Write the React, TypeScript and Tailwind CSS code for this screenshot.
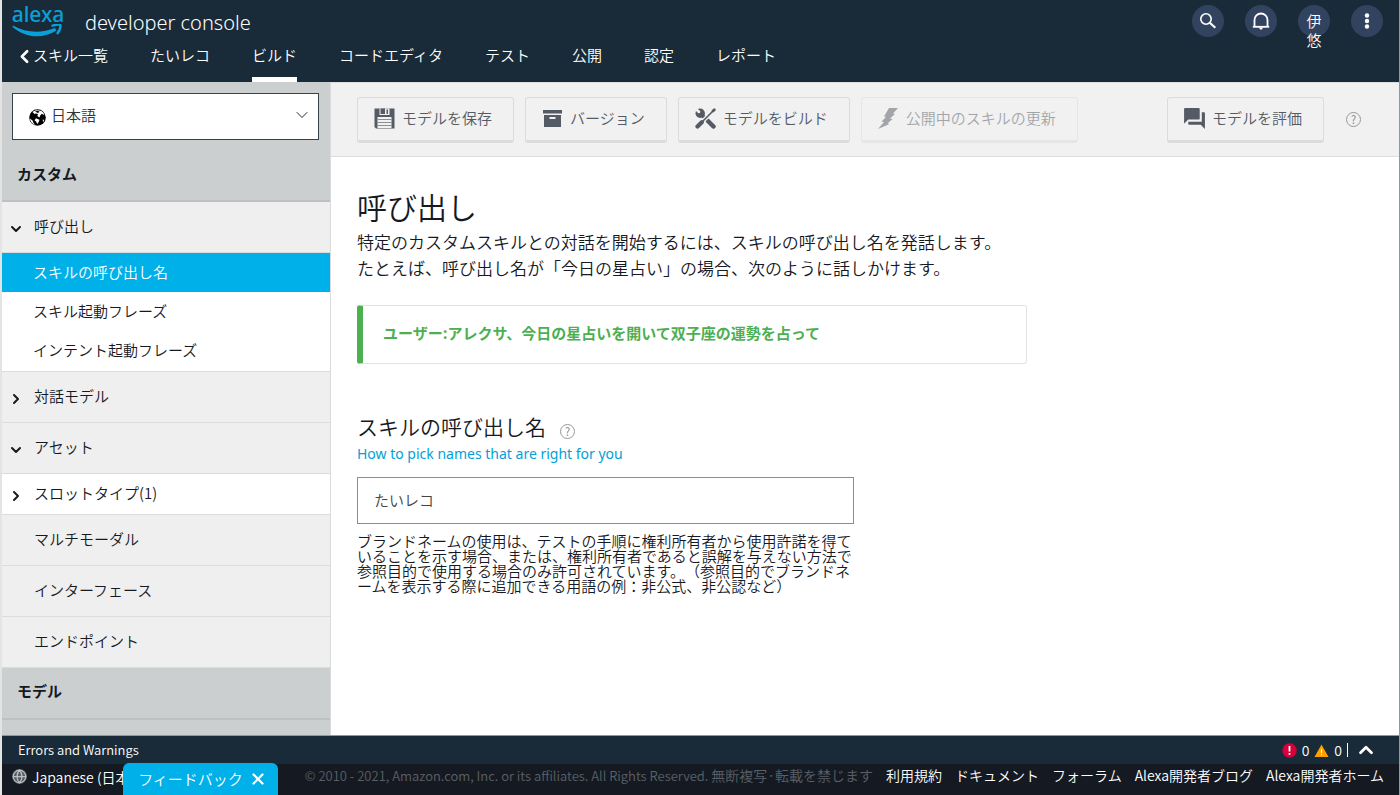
import type { ReactNode } from "react";
import { ChevronDown, ChevronLeft, ChevronRight, ChevronUp, Globe, X } from "lucide-react";
import { MdForum } from "react-icons/md";

const jp = "font-['Noto_Sans_CJK_JP',sans-serif]";

const tabs = ["たいレコ", "ビルド", "コードエディタ", "テスト", "公開", "認定", "レポート"];

const footerLinks = ["利用規約", "ドキュメント", "フォーラム", "Alexa開発者ブログ", "Alexa開発者ホーム"];

function SearchIcon() {
  return (
    <svg width="18" height="18" viewBox="0 0 18 18" fill="none" stroke="currentColor" aria-hidden>
      <circle cx="7" cy="7" r="5.200" strokeWidth="1.600" />
      <path d="M10.800 10.800l5.500 5" strokeWidth="2.200" />
    </svg>
  );
}

function BellIcon() {
  return (
    <svg width="18" height="18" viewBox="0 0 18 18" fill="none" stroke="currentColor" strokeWidth="1.800" aria-hidden>
      <path d="M2.500 14.500V8a6.500 6.500 0 0 1 13 0v6.500" />
      <path d="M.800 14.800h16.400" />
      <path d="M6.500 15.500h5L9 18z" fill="currentColor" stroke="none" />
    </svg>
  );
}

function DotsIcon() {
  return (
    <svg width="16" height="16" viewBox="0 0 16 16" fill="currentColor" aria-hidden>
      <circle cx="8" cy="2.5" r="2.2" />
      <circle cx="8" cy="8" r="2.2" />
      <circle cx="8" cy="13.5" r="2.2" />
    </svg>
  );
}

function EarthIcon() {
  return (
    <svg width="17" height="17" viewBox="0 0 17 17" className="pointer-events-none absolute left-[17px] top-4" aria-hidden>
      <circle cx="8.500" cy="8.500" r="8.300" />
      <path d="M3.500 3C6 .800 11.500.500 14.300 3.600l1.200 2.600-2.700-1.400-1.600 1.700-.700 2L8.300 7 9 5 7 4.500l-1.500.600L4.500 4z" fill="#fff" />
      <path d="M6 2.600l2.800-.800 1.700.900-1.500 1.200z" />
      <path d="M.900 9.500l2.600 2 1 2.500 1.600 1.800C3.300 15 1.300 12.800.900 9.500zM7 9.200l3.500 1.500-.800 2.300-1.500 2-1-2.300-1.600-1.500z" fill="#fff" />
      <path d="M13.700 10.500l1.500.500-1.200 2.600z" fill="#fff" />
    </svg>
  );
}

function SaveIcon() {
  return (
    <svg width="21" height="21" viewBox="0 0 21 21" aria-hidden>
      <path d="M.5.5h20v20H2l-1.500-1.500z" fill="#545b64" />
      <path d="M5.500.5h10v6.500h-10z" fill="#f1f1f1" />
      <path d="M6.500.5h4.500v5.500H6.500zM12.500 1.500h1.500v4.500h-1.500z" fill="#545b64" />
      <path d="M3.500 9h14v11h-14z" fill="#f1f1f1" />
      <path d="M3.500 11.500h14M3.500 14.500h14M3.500 17.500h14" stroke="#8b9096" />
    </svg>
  );
}

function ArchiveIcon() {
  return (
    <svg width="21" height="21" viewBox="0 0 21 21" aria-hidden>
      <path d="M1 2h19v3.500H1z" fill="#545b64" />
      <path d="M2 7h17v12H2z" fill="#545b64" />
      <path d="M7.500 9h6v2h-6z" fill="#f1f1f1" />
    </svg>
  );
}

function ToolsIcon() {
  return (
    <svg width="21" height="21" viewBox="0 0 21 21" fill="none" strokeLinecap="round" aria-hidden>
      <circle cx="5.200" cy="5.200" r="4.700" fill="#545b64" />
      <path d="M1.500-.500l3.800 3.800-.200 1.800-1.800.200L-.500 1.500z" fill="#f1f1f1" />
      <path d="M7 7l4 4.500" stroke="#545b64" strokeWidth="3.500" />
      <path d="M13 13l5.500 5.500" stroke="#545b64" strokeWidth="4.500" />
      <path d="M19 2L4 17" stroke="#f1f1f1" strokeWidth="4" strokeLinecap="butt" />
      <path d="M18.500 2.500L8 13" stroke="#545b64" strokeWidth="1.600" />
      <path d="M19.300 1.700l-1.300 1.300" stroke="#545b64" strokeWidth="2.800" />
      <path d="M6.800 14.200l-4.300 4.300" stroke="#545b64" strokeWidth="4.200" />
    </svg>
  );
}

function BoltIcon() {
  return (
    <svg width="21" height="21" viewBox="0 0 21 21" fill="#545b64" aria-hidden>
      <path d="M11 0h9l-5 5.500 2 .5-5 4.500 2.500.5-5 4.500 2 .5L0 21l6-7-2.500-.5L8 9l-2-.5z" />
    </svg>
  );
}

function HelpButton() {
  return (
    <button
      type="button"
      aria-label="ヘルプ"
      className="flex h-[15px] w-[15px] shrink-0 items-center justify-center rounded-full border border-[#959a9e] text-[11px] leading-none text-[#7b8084]"
    >
      ?
    </button>
  );
}

function RoundButton({ label, children }: { label: string; children: ReactNode }) {
  return (
    <button
      type="button"
      aria-label={label}
      className="flex h-8 w-8 items-center justify-center rounded-full bg-[#32435f] text-white"
    >
      {children}
    </button>
  );
}

function ToolButton({ icon, label, disabled = false }: { icon: ReactNode; label: string; disabled?: boolean }) {
  return (
    <button
      type="button"
      disabled={disabled}
      className="flex h-[46px] shrink-0 items-center gap-[7px] rounded-[3px] border border-b-[3px] border-[#dcdcdc] pl-4 pr-[21px] text-[15px] leading-5 text-[#545b64] disabled:opacity-50"
    >
      {icon}
      <span className="pb-[2px]">{label}</span>
    </button>
  );
}

function SideRow({ label, state, slim = false }: { label: string; state?: "open" | "closed"; slim?: boolean }) {
  return (
    <a
      href="#"
      className={`flex shrink-0 items-center border-b border-[#dcdcdc] pl-[6px] ${slim ? "h-[41px] bg-white" : "h-[51px] bg-[#efefef]"}`}
    >
      <span className="flex w-[26px] pt-[3px]">
        {state === "open" && <ChevronDown size={16} strokeWidth={3} aria-hidden />}
        {state === "closed" && <ChevronRight size={16} strokeWidth={3} aria-hidden />}
      </span>
      <span className="pb-[3px]">{label}</span>
    </a>
  );
}

function Header() {
  return (
    <header className="flex h-[82px] shrink-0 justify-between bg-[#192b38] pr-4 text-white">
      <div className="flex flex-col">
        <div className="flex h-[37px] items-start pl-[9px]">
          <a href="#" aria-label="alexa" className="flex w-[54px] flex-col items-center pt-1 text-[#0a9fd8]">
            <span className="h-[20px] font-['Noto_Sans',sans-serif] text-[21px] font-medium leading-[20px]">alexa</span>
            <svg width="52" height="14" viewBox="0 0 52 14" aria-hidden>
              <path d="M1 1.500c13 7.500 28 8 42 2.500l1.500 2.500C31 15 14 14.500.500 3z" fill="currentColor" />
              <path d="M39.500 2c5-2 9-1.800 9-.5s-.500 5-3.500 8.500" fill="none" stroke="currentColor" strokeWidth="2.400" />
            </svg>
          </a>
          <span className="pl-5 pt-[9px] font-['Noto_Sans',sans-serif] text-xl font-light leading-7">developer console</span>
        </div>
        <nav className="flex grow gap-[42px] pl-3 text-[15px] leading-9" aria-label="メイン">
          <a href="#" className="flex">
            <ChevronLeft size={21} strokeWidth={3} className="-mr-[2px] mt-[9px]" aria-hidden />
            スキル一覧
          </a>
          {tabs.map((tab) => (
            <a href="#" key={tab} className={tab === "ビルド" ? "border-b-[5px] border-white" : ""}>
              {tab}
            </a>
          ))}
        </nav>
      </div>
      <div className="flex items-start gap-[21px] pt-[5px]">
        <RoundButton label="検索">
          <SearchIcon />
        </RoundButton>
        <RoundButton label="通知">
          <BellIcon />
        </RoundButton>
        <button type="button" className="h-8 w-8 rounded-full bg-[#32435f] text-[15px] leading-[19px] text-white">
          <span className="mx-auto block h-[21px] w-4">伊悠</span>
        </button>
        <RoundButton label="メニュー">
          <DotsIcon />
        </RoundButton>
      </div>
    </header>
  );
}

function Sidebar() {
  return (
    <aside className="flex w-[329px] shrink-0 flex-col overflow-hidden border-r border-[#d9dcdc] bg-[#cbcfcf] text-[15px] leading-5 text-[#16191f]">
      <div className="relative ml-[10px] mr-[11px] mt-[11px] h-[47px] shrink-0">
        <select
          aria-label="言語"
          className="h-full w-full appearance-none border border-[#37424a] bg-white pb-1 pl-[38px] text-[15px] text-[#333]"
        >
          <option>日本語</option>
        </select>
        <EarthIcon />
        <ChevronDown
          size={20}
          strokeWidth={1}
          className="pointer-events-none absolute right-[7px] top-3 text-black"
          aria-hidden
        />
      </div>
      <h2 className="flex h-[62px] shrink-0 items-center border-b-2 border-[#bfc1c1] pl-[15px] pt-[7px] font-bold">カスタム</h2>
      <SideRow label="呼び出し" state="open" />
      <div className="flex shrink-0 flex-col border-b border-[#dcdcdc] bg-white pb-px">
        <a href="#" className="flex h-[39px] items-center bg-[#00b0e8] pb-px pl-[31px] text-white">
          スキルの呼び出し名
        </a>
        <a href="#" className="flex h-[39px] items-center pb-px pl-[31px]">
          スキル起動フレーズ
        </a>
        <a href="#" className="flex h-[39px] items-center pb-px pl-[31px]">
          インテント起動フレーズ
        </a>
      </div>
      <SideRow label="対話モデル" state="closed" />
      <SideRow label="アセット" state="open" />
      <SideRow label="スロットタイプ(1)" state="closed" slim />
      <SideRow label="マルチモーダル" />
      <SideRow label="インターフェース" />
      <SideRow label="エンドポイント" />
      <h2 className="flex h-[52px] shrink-0 items-center border-b-2 border-[#bfc1c1] pb-1 pl-[15px] font-bold">モデル</h2>
    </aside>
  );
}

function Toolbar() {
  return (
    <div className="flex h-[75px] shrink-0 items-center gap-[11px] border-b border-t border-[#dddfdf] bg-[#f1f1f1] pl-[26px] pr-[38px]">
      <ToolButton icon={<SaveIcon />} label="モデルを保存" />
      <ToolButton icon={<ArchiveIcon />} label="バージョン" />
      <ToolButton icon={<ToolsIcon />} label="モデルをビルド" />
      <ToolButton icon={<BoltIcon />} label="公開中のスキルの更新" disabled />
      <div className="ml-auto flex items-center gap-[22px]">
        <ToolButton icon={<MdForum size={25} className="-mx-[2px]" aria-hidden />} label="モデルを評価" />
        <HelpButton />
      </div>
    </div>
  );
}

function Invocation() {
  return (
    <main className="grow overflow-hidden pl-[26px] pr-6 pt-[26px] text-[#16191f]">
      <h1 className="text-[30px] leading-[46px]">呼び出し</h1>
      <p className="text-[17px] leading-[26px]">
        特定のカスタムスキルとの対話を開始するには、スキルの呼び出し名を発話します。
        <br />
        たとえば、呼び出し名が「今日の星占い」の場合、次のように話しかけます。
      </p>
      <p className="mt-6 max-w-[670px] rounded-[3px] border border-l-[6px] border-[#e3e3e3] border-l-[#4caf50] pb-5 pl-5 pt-[17px] text-[15px] font-bold leading-5 text-[#4caf50]">
        ユーザー:アレクサ、今日の星占いを開いて双子座の運勢を占って
      </p>
      <div className="mt-[46px] flex items-center gap-[14px]">
        <label htmlFor="invocation-name" className="text-[21px] leading-8">
          スキルの呼び出し名
        </label>
        <span className="pt-[10px]">
          <HelpButton />
        </span>
      </div>
      <a href="#" className="block font-['Noto_Sans',sans-serif] text-sm leading-6 font-normal text-[#00a1d9]">
        How to pick names that are right for you
      </a>
      <input
        id="invocation-name"
        type="text"
        defaultValue="たいレコ"
        className="mt-[11px] block h-[47px] w-full max-w-[497px] border border-[#1cb5e8] px-4 pb-[3px] text-[15px] text-[#444]"
      />
      <p className="mt-[9px] max-w-[497px] text-[15px] leading-[15px] [line-break:anywhere] [text-spacing-trim:space-all]">
        ブランドネームの使用は、テストの手順に権利所有者から使用許諾を得ていることを示す場合、または、権利所有者であると誤解を与えない方法で参照目的で使用する場合のみ許可されています。（参照目的でブランドネームを表示する際に追加できる用語の例：非公式、非公認など）
      </p>
    </main>
  );
}

function StatusBar() {
  return (
    <div className="flex h-[29px] shrink-0 items-center justify-between border-t border-[#8b9aa1] bg-[#192b38] pl-4 pr-6 text-sm text-white">
      <span className="text-[13px]">Errors and Warnings</span>
      <div className="flex items-center gap-[5px]">
        <svg width="15" height="15" viewBox="0 0 15 15" aria-hidden>
          <circle cx="7.5" cy="7.5" r="7.200" fill="#d5003c" />
          <path d="M6.600 3h1.800v5.500H6.600zM6.600 10h1.800v1.800H6.600z" fill="#fff" />
        </svg>
        <span>0</span>
        <svg width="15" height="15" viewBox="0 0 15 15" aria-hidden>
          <path d="M7.500 1.500l7 12.500h-14z" fill="#ffa000" />
          <path d="M7 6h1v4H7zM7 11h1v1.200H7z" fill="#fff" />
        </svg>
        <span>0</span>
        <span className="h-[14px] w-px bg-white" />
        <button type="button" aria-label="開く" className="ml-1">
          <ChevronUp size={22} strokeWidth={3} className="-mx-[2px]" aria-hidden />
        </button>
      </div>
    </div>
  );
}

function Footer() {
  return (
    <footer className="relative flex h-[31px] shrink-0 items-center whitespace-nowrap bg-[#151a22] pb-[9px] pl-[10px] pr-[15px] text-sm text-white">
      <button type="button" className="flex items-center gap-[5px] pt-[3px]">
        <Globe size={15} strokeWidth={2} className="rounded-full bg-[#555c63] text-[#b9bec2]" aria-hidden />
        <span className="w-[91px] overflow-hidden text-left">Japanese (日本語)</span>
      </button>
      <div className="absolute bottom-0 left-[121px] flex h-8 w-[155px] items-center justify-center gap-[6px] rounded-t-md bg-[#00b0e8] pl-1 text-[15px]">
        <a href="#">フィードバック</a>
        <button type="button" aria-label="閉じる">
          <X size={18} strokeWidth={3} aria-hidden />
        </button>
      </div>
      <div className="ml-auto flex items-baseline gap-[13px]">
        <span className="text-[#5a6068]">
          <span className="text-[13px]">© 2010 - 2021, Amazon.com, Inc. or its affiliates. All Rights Reserved. </span>
          無断複写·転載を禁じます
        </span>
        {footerLinks.map((link) => (
          <a href="#" key={link}>
            {link}
          </a>
        ))}
      </div>
    </footer>
  );
}

export default function App() {
  return (
    <div
      className={`flex h-screen flex-col overflow-hidden border-l-2 border-r border-[#e4e4e4] border-r-[#8d989f] bg-white font-[350] ${jp}`}
    >
      <Header />
      <div className="flex min-h-0 grow">
        <Sidebar />
        <div className="flex min-w-0 grow flex-col">
          <Toolbar />
          <Invocation />
        </div>
      </div>
      <StatusBar />
      <Footer />
    </div>
  );
}
